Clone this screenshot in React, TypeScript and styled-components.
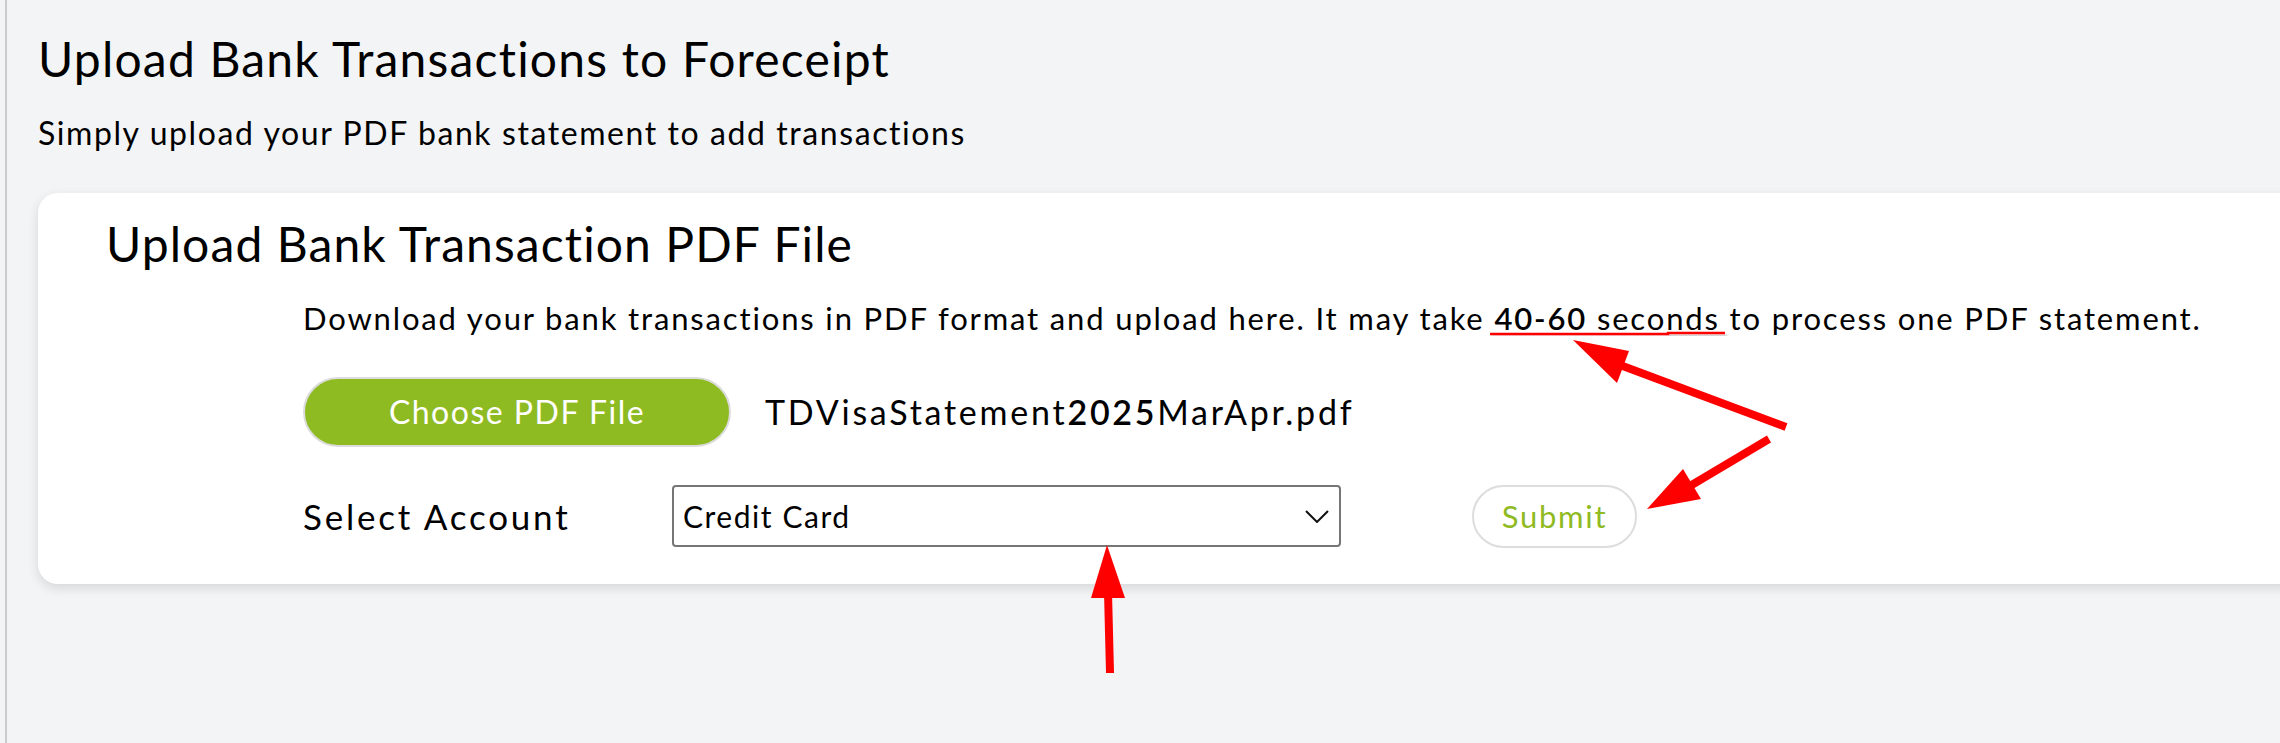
import React from "react";
import styled, { createGlobalStyle } from "styled-components";

const GlobalStyle = createGlobalStyle`
  html, body {
    margin: 0;
    padding: 0;
    overflow: hidden;
    background-color: #f3f4f6;
  }
  body {
    font-family: Lato, "Open Sans", sans-serif;
    color: #000;
  }
`;

const Frame = styled.div`
  position: relative;
  width: 2280px;
  height: 743px;
  overflow: hidden;
`;

const Page = styled.main`
  height: 100%;
  margin-left: 5px;
  border-left: 2px solid #cbcbcb;
  padding: 30px 0 0 31px;
  box-sizing: border-box;
`;

const PageTitle = styled.h1`
  margin: 0;
  font-size: 48px;
  line-height: 1.2;
  font-weight: 400;
  letter-spacing: 1.2px;
`;

const Subtitle = styled.p`
  margin: 26px 0 0;
  font-size: 32px;
  line-height: 1.2;
  letter-spacing: 1.58px;
`;

const Card = styled.section`
  margin-top: 41px;
  width: calc(100% + 60px);
  background: #fff;
  border-radius: 20px;
  box-shadow: 0 4px 12px rgba(0, 0, 0, 0.12);
  padding: 22px 0 36px 68px;
  box-sizing: border-box;
`;

const CardTitle = styled.h2`
  margin: 0;
  font-size: 48px;
  line-height: 1.2;
  font-weight: 400;
  letter-spacing: 1.1px;
`;

const CardBody = styled.div`
  margin-left: 197px;
`;

const Description = styled.p`
  margin: 27px 0 0;
  font-size: 31px;
  line-height: 1.2;
  letter-spacing: 1.85px;
`;

const Strong = styled.span`
  font-weight: 600;
`;

const Row = styled.div<{ $gap?: number; $top: number }>`
  display: flex;
  align-items: center;
  gap: ${(p) => p.$gap ?? 0}px;
  margin-top: ${(p) => p.$top}px;
`;

const ChooseButton = styled.button`
  width: 428px;
  height: 70px;
  border: 2px solid #dcdcdc;
  border-radius: 35px;
  background: #8fbb22;
  color: #fff;
  font-family: inherit;
  font-size: 32px;
  letter-spacing: 1.5px;
  cursor: pointer;
`;

const FileName = styled.span`
  font-size: 34px;
  letter-spacing: 2.75px;
`;

const Label = styled.label`
  width: 369px;
  font-size: 35px;
  letter-spacing: 2.8px;
`;

const SelectWrap = styled.div`
  position: relative;
  width: 669px;
  height: 62px;
`;

const Select = styled.select`
  width: 100%;
  height: 100%;
  appearance: none;
  border: 2px solid #767676;
  border-radius: 4px;
  background: #fff;
  padding: 0 0 0 9px;
  font-family: inherit;
  font-size: 30px;
  letter-spacing: 1.55px;
  color: #000;
`;

const Chevron = styled.svg`
  position: absolute;
  right: 12px;
  top: 25px;
  pointer-events: none;
`;

const SubmitButton = styled.button`
  margin-left: 131px;
  width: 165px;
  height: 63px;
  border: 2px solid #dddddd;
  border-radius: 32px;
  background: #fff;
  color: #8fba22;
  font-family: inherit;
  font-size: 31px;
  letter-spacing: 1.7px;
  cursor: pointer;
`;

const Annotations = styled.svg`
  position: absolute;
  top: 0;
  left: 0;
  pointer-events: none;
`;

const App: React.FC = () => {
  return (
    <Frame>
      <GlobalStyle />
      <Page>
        <PageTitle>Upload Bank Transactions to Foreceipt</PageTitle>
        <Subtitle>Simply upload your PDF bank statement to add transactions</Subtitle>
        <Card>
          <CardTitle>Upload Bank Transaction PDF File</CardTitle>
          <CardBody>
            <Description>
              Download your bank transactions in PDF format and upload here. It may take{" "}
              <Strong>40-60</Strong> seconds to process one PDF statement.
            </Description>
            <Row $top={40} $gap={34}>
              <ChooseButton>Choose PDF File</ChooseButton>
              <FileName>
                TDVisaStatement<Strong>2025</Strong>MarApr.pdf
              </FileName>
            </Row>
            <Row $top={38}>
              <Label htmlFor="account">Select Account</Label>
              <SelectWrap>
                <Select id="account" defaultValue="credit">
                  <option value="credit">Credit Card</option>
                  <option value="chequing">Chequing</option>
                  <option value="savings">Savings</option>
                </Select>
                <Chevron width="24" height="13" viewBox="0 0 24 13">
                  <path d="M1 1 L12 12 L23 1" fill="none" stroke="#111" strokeWidth="2" />
                </Chevron>
              </SelectWrap>
              <SubmitButton>Submit</SubmitButton>
            </Row>
          </CardBody>
        </Card>
      </Page>
      <Annotations width="2280" height="743" viewBox="0 0 2280 743">
        <defs>
          <filter id="shade" x="-5%" y="-200%" width="110%" height="500%">
            <feDropShadow dx="2" dy="3" stdDeviation="1.5" floodColor="#000" floodOpacity="0.3" />
          </filter>
        </defs>
        <path d="M1490 334 L1668 334 L1668 333 L1725 333" fill="none" stroke="#ff0000" strokeWidth="2.5" filter="url(#shade)" />
        <line x1="1786" y1="427" x2="1620" y2="365" stroke="#ff0000" strokeWidth="8" />
        <polygon points="1573,340 1629,351 1617,383" fill="#ff0000" />
        <line x1="1769" y1="439" x2="1690" y2="486" stroke="#ff0000" strokeWidth="8" />
        <polygon points="1647,509 1683,469 1701,499" fill="#ff0000" />
        <line x1="1110" y1="673" x2="1108" y2="592" stroke="#ff0000" strokeWidth="8" />
        <polygon points="1107,545 1091,598 1125,598" fill="#ff0000" />
      </Annotations>
    </Frame>
  );
};

export default App;
